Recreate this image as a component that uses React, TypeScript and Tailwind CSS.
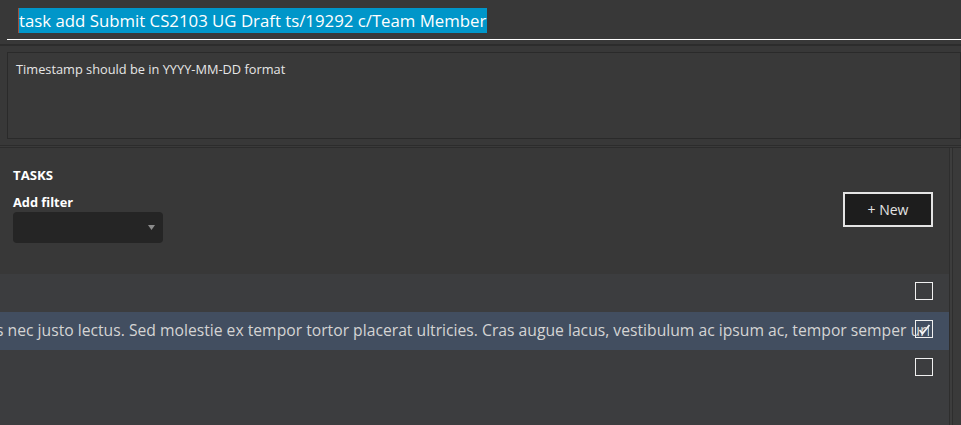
import React from "react";

function Checkbox({ checked }: { checked?: boolean }) {
  return (
    <div className="w-[18px] h-[18px] border border-[#f0f0f0] bg-transparent flex items-center justify-center shrink-0">
      {checked && (
        <svg width="13" height="11" viewBox="0 0 13 11" fill="none">
          <polyline points="1.5,6 4.5,9.5 11.5,1" stroke="#f4f4f4" strokeWidth="1.8" fill="none" />
        </svg>
      )}
    </div>
  );
}

export default function App() {
  return (
    <div className="w-[961px] h-[425px] bg-[#383838] overflow-hidden flex flex-col font-['Open_Sans',sans-serif]">
      {/* command box */}
      <div className="pl-[7px] shrink-0">
        <div className="h-[40px] border-b border-white pl-[11px] pt-[8px]">
          <span className="inline-block h-[25px] leading-[25px] bg-[#0096c9] text-white text-[16.8px] pr-[1px] border-l border-[#a0503c] whitespace-nowrap">
            task add Submit CS2103 UG Draft ts/19292 c/Team Member
          </span>
        </div>
      </div>
      <div className="h-[4px] shrink-0" />
      <div className="h-[2px] bg-[#2c2c2c] shrink-0" />
      <div className="pl-[7px] pt-[6px] shrink-0">
        <div className="h-[87px] border border-[#2a2a2a] bg-[#393939] pl-[8px] pt-[7px] text-[12.8px] text-[#e6e6e6]">
          Timestamp should be in YYYY-MM-DD format
        </div>
      </div>
      <div className="h-[6px] shrink-0" />
      <div className="h-[1px] bg-[#2c2c2c] shrink-0" />
      <div className="h-[1px] bg-[#3a3a3a] shrink-0" />
      <div className="h-[1px] bg-[#2c2c2c] shrink-0" />
      {/* panel */}
      <div className="flex flex-1 min-h-0">
        <div className="w-[949px] flex flex-col">
          <div className="h-[126px] shrink-0 flex justify-between">
            <div className="pl-[13px] pt-[19px] flex flex-col">
              <div className="text-[13.2px] font-bold text-white leading-[16px]">TASKS</div>
              <div className="text-[12.8px] font-bold text-white leading-[17px] mt-[11px]">Add filter</div>
              <div className="mt-[1px] w-[150px] h-[31px] bg-[#252525] rounded-[4px] flex items-center justify-end pr-[8px]">
                <svg width="7" height="5" viewBox="0 0 7 5">
                  <polygon points="0,0 7,0 3.5,5" fill="#8c8c8c" />
                </svg>
              </div>
            </div>
            <button className="mt-[44px] mr-[16px] w-[90px] h-[35px] border-2 border-[#e4e4e4] bg-[#1d1d1d] text-[#e4e4e4] text-[14px] flex items-center justify-center">
              + New
            </button>
          </div>
          <div className="flex-1 bg-[#3c3d3f] flex flex-col">
            <div className="h-[38px] relative">
              <div className="absolute right-[16px] top-[8px]">
                <Checkbox />
              </div>
            </div>
            <div className="h-[38px] bg-[#424e60] flex items-center relative">
              <div className="flex-1 min-w-0 overflow-hidden mr-[20px]">
                <div className="whitespace-nowrap text-[15.7px] text-[#d4d4d4] ml-[-4px]">
                  s nec justo lectus. Sed molestie ex tempor tortor placerat ultricies. Cras augue lacus, vestibulum ac ipsum ac, tempor semper urn
                </div>
              </div>
              <div className="absolute right-[16px] top-[8px]">
                <Checkbox checked />
              </div>
            </div>
            <div className="h-[38px] relative">
              <div className="absolute right-[16px] top-[8px]">
                <Checkbox />
              </div>
            </div>
          </div>
        </div>
        <div className="flex-1 flex">
          <div className="w-[1px] bg-[#2e2e2e]" />
          <div className="w-[2px] bg-[#3d3d3d]" />
          <div className="w-[1px] bg-[#2e2e2e]" />
          <div className="flex-1 bg-[#3a3a3a]" />
        </div>
      </div>
    </div>
  );
}
